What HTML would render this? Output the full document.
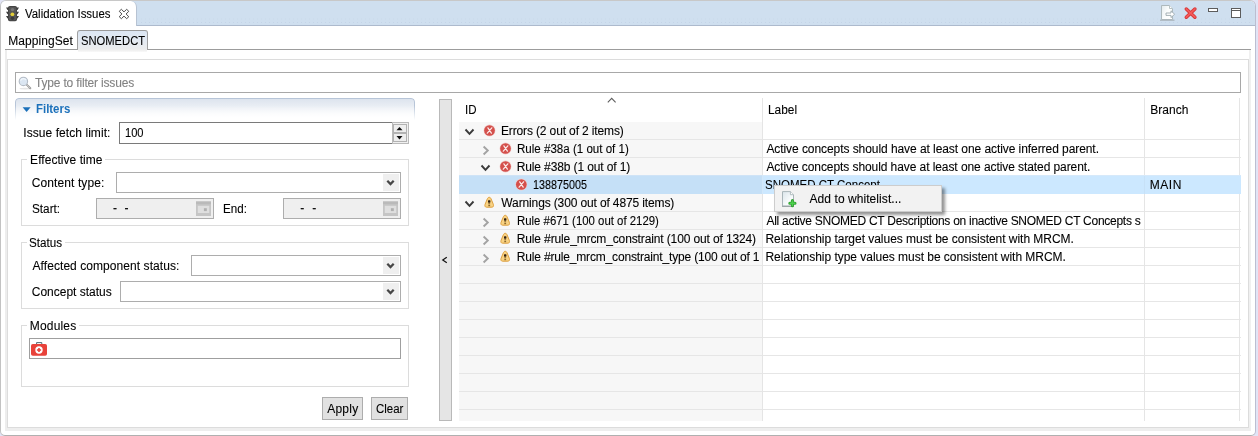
<!DOCTYPE html>
<html><head><meta charset="utf-8"><title>Validation Issues</title>
<style>
html,body{margin:0;padding:0;}
body{width:1258px;height:436px;overflow:hidden;background:#e1e4f6;font-family:"Liberation Sans",sans-serif;font-size:12px;color:#000;position:relative;}
.a{position:absolute;box-sizing:border-box;}
.t{position:absolute;white-space:pre;line-height:14px;height:14px;-webkit-text-stroke:0.1px currentColor;}
.clip{position:absolute;overflow:hidden;}
.clip .t{position:absolute;}
#win{left:0;top:0;width:1256px;height:436px;background:#fff;border:1px solid #c2c2c2;border-top-color:#c8c8c8;border-bottom-color:#b0b0b0;border-right-color:#bcbed0;border-radius:6px 6px 5px 5px;overflow:hidden;}
#hdr{left:0;top:0px;width:1256px;height:25px;background:#cfdfef;border-bottom:1px solid #adbacd;}
#vtab{left:0px;top:0px;width:136px;height:25px;background:#fff;border-radius:0 6px 0 0;border-right:1px solid #b7c3d3;}
.hl{height:1px;} .vl{width:1px;}
.combo{background:#fff;border:1px solid #adadad;}
.combo .btn{position:absolute;right:1px;top:1px;bottom:1px;width:16px;background:#efefef;}
.date{background:#efefef;border:1px solid #adadad;}
.grp{border:1px solid #dcdcdc;}
.btnb{background:#e1e1e1;border:1px solid #adadad;}
.rowline{left:459px;width:782px;height:1px;background:#e6e6e6;}
</style></head><body>
<div class="a" id="win"><div class="a" id="hdr"><div class="a" style="left:140px;top:21px;width:1112px;height:1px;background:repeating-linear-gradient(90deg,#c5d5e8 0 1px,transparent 1px 4px)"></div><div class="a" style="left:140px;top:17px;width:1112px;height:2px;background:repeating-linear-gradient(90deg,#ccdcec 0 1px,transparent 1px 4px)"></div></div><div class="a" id="vtab"></div></div>

<!-- inner tab folder frame -->
<div class="a" style="left:5px;top:50px;width:2px;height:381px;background:#ededed"></div>
<div class="a" style="left:1249px;top:50px;width:2px;height:381px;background:#f0f0f0"></div>
<div class="a" style="left:5px;top:428px;width:1246px;height:3px;background:#eeeeee"></div>
<div class="a" style="left:7px;top:59px;width:1242px;height:369px;border:1px solid #dcdcdc;background:#fff"></div>
<div class="a hl" style="left:5px;top:49px;width:1246px;background:#9c9c9c"></div>
<!-- selected inner tab -->
<div class="a" style="left:77px;top:30px;width:71px;height:20px;border:1px solid #a0a0a0;border-top-color:#999;border-bottom:none;border-radius:3px 3px 0 0;background:linear-gradient(#dbe6f3,#e4eaf2 50%,#ececec)"></div>
<div class="a" style="left:78px;top:49px;width:69px;height:3px;background:linear-gradient(#ececec,#f3f3f3 70%,#fbfbfb)"></div>

<!-- filter text -->
<div class="a" style="left:15px;top:72px;width:1226px;height:21px;border:1px solid #a8a8a8;background:#fff"></div>

<!-- Filters section header -->
<div class="a" style="left:15px;top:98px;width:400px;height:22px;border:1px solid #b7c5d8;border-bottom:none;border-radius:4px 4px 0 0;background:linear-gradient(#dde4ee,#ffffff 95%);-webkit-mask-image:linear-gradient(#000 35%,transparent 100%);mask-image:linear-gradient(#000 35%,transparent 100%)"></div>

<!-- spinner -->
<div class="a" style="left:392px;top:122px;width:17px;height:22px;border:1px solid #b9b9b9;background:#f0f0f0"></div>
<div class="a" style="left:119px;top:122px;width:273px;height:22px;border:1px solid #7a7a7a;border-right:none;background:#fff"></div>
<div class="a" style="left:393px;top:124px;width:14px;height:9px;border:1px solid #b2b2b2;background:#eeeeee"></div>
<div class="a" style="left:393px;top:133px;width:14px;height:9px;border:1px solid #b2b2b2;background:#eeeeee"></div>

<!-- groups -->
<div class="a grp" style="left:21px;top:159px;width:388px;height:67px"></div>
<div class="a" style="left:27px;top:155px;width:78px;height:10px;background:#fff"></div>
<div class="a grp" style="left:21px;top:242px;width:388px;height:67px"></div>
<div class="a" style="left:27px;top:238px;width:38px;height:10px;background:#fff"></div>
<div class="a grp" style="left:21px;top:325px;width:388px;height:62px"></div>
<div class="a" style="left:27px;top:321px;width:52px;height:10px;background:#fff"></div>

<!-- combos -->
<div class="a combo" style="left:116px;top:172px;width:285px;height:21px"><div class="btn"></div></div>
<div class="a combo" style="left:191px;top:255px;width:210px;height:21px"><div class="btn"></div></div>
<div class="a combo" style="left:120px;top:281px;width:281px;height:21px"><div class="btn"></div></div>
<!-- dates -->
<div class="a date" style="left:96px;top:198px;width:118px;height:21px"></div>
<div class="a date" style="left:283px;top:198px;width:118px;height:21px"></div>
<!-- modules input -->
<div class="a" style="left:29px;top:338px;width:372px;height:21px;border:1px solid #9f9f9f;background:#fff"></div>
<!-- buttons -->
<div class="a btnb" style="left:322px;top:397px;width:41px;height:23px"></div>
<div class="a btnb" style="left:371px;top:397px;width:37px;height:23px"></div>

<!-- sash -->
<div class="a" style="left:439px;top:99px;width:13px;height:322px;background:#e5e5e5;border:1px solid #b9b9b9"></div>

<!-- table -->
<div class="a" style="left:459px;top:122px;width:303px;height:299px;background:#f7f7f7"></div>
<div class="a rowline" style="top:139px"></div>
<div class="a rowline" style="top:157px"></div>
<div class="a rowline" style="top:211px"></div>
<div class="a rowline" style="top:229px"></div>
<div class="a rowline" style="top:247px"></div>
<div class="a rowline" style="top:265px"></div>
<div class="a rowline" style="top:283px"></div>
<div class="a rowline" style="top:301px"></div>
<div class="a rowline" style="top:319px"></div>
<div class="a rowline" style="top:337px"></div>
<div class="a rowline" style="top:355px"></div>
<div class="a rowline" style="top:373px"></div>
<div class="a rowline" style="top:391px"></div>
<div class="a rowline" style="top:409px"></div>
<div class="a vl" style="left:762px;top:98px;height:323px;background:#e5e5e5"></div>
<div class="a vl" style="left:1144px;top:98px;height:323px;background:#e5e5e5"></div>
<div class="a vl" style="left:1239px;top:98px;height:323px;background:#e5e5e5"></div>

<div class="a" style="left:459px;top:175px;width:782px;height:19px;background:#cce8ff;border-top:1px solid #d6e9fa"></div>
<div class="a" style="left:459px;top:175px;width:303px;height:19px;background:#c5e0f7;border-top:1px solid #cfe3f6"></div>
<div class="a" style="left:762px;top:175px;width:1px;height:19px;background:#d3e8fa"></div>
<div class="a" style="left:1144px;top:176px;width:1px;height:18px;background:#c7e1f7"></div>
<div class="a" id="txt" style="left:0;top:0;width:1258px;height:436px;will-change:transform">
<span class='t' style='left:25.00px;top:7px;font-size:12px;letter-spacing:0.000px;transform:scaleX(0.9512);transform-origin:0 0;'>Validation Issues</span>
<span class='t' style='left:8.16px;top:34px;font-size:12px;letter-spacing:0.075px;'>MappingSet</span>
<span class='t' style='left:80.55px;top:34px;font-size:12px;letter-spacing:0.000px;transform:scaleX(0.9333);transform-origin:0 0;'>SNOMEDCT</span>
<span class='t' style='left:35.00px;top:76px;font-size:12px;letter-spacing:-0.177px;color:#828282'>Type to filter issues</span>
<span class='t' style='left:35.76px;top:102px;font-size:12px;letter-spacing:0.000px;transform:scaleX(0.9508);transform-origin:0 0;font-weight:bold;color:#1b70ba;-webkit-text-stroke:0'>Filters</span>
<span class='t' style='left:23.33px;top:126px;font-size:12px;letter-spacing:0.059px;'>Issue fetch limit:</span>
<span class='t' style='left:125.12px;top:126px;font-size:12px;letter-spacing:0.000px;transform:scaleX(0.9262);transform-origin:0 0;'>100</span>
<span class='t' style='left:30.08px;top:153px;font-size:12px;letter-spacing:0.050px;'>Effective time</span>
<span class='t' style='left:31.80px;top:176px;font-size:12px;letter-spacing:0.091px;'>Content type:</span>
<span class='t' style='left:31.69px;top:202px;font-size:12px;letter-spacing:0.000px;transform:scaleX(0.9788);transform-origin:0 0;'>Start:</span>
<span class='t' style='left:222.87px;top:202px;font-size:12px;letter-spacing:0.000px;transform:scaleX(0.9677);transform-origin:0 0;'>End:</span>
<span class='t' style='left:112.93px;top:201px;font-size:12px;letter-spacing:0.343px;'>-  -</span>
<span class='t' style='left:300.23px;top:201px;font-size:12px;letter-spacing:0.419px;'>-  -</span>
<span class='t' style='left:29.31px;top:236px;font-size:12px;letter-spacing:0.000px;transform:scaleX(0.9691);transform-origin:0 0;'>Status</span>
<span class='t' style='left:32.56px;top:259px;font-size:12px;letter-spacing:0.062px;'>Affected component status:</span>
<span class='t' style='left:31.80px;top:285px;font-size:12px;letter-spacing:-0.012px;'>Concept status</span>
<span class='t' style='left:29.80px;top:319px;font-size:12px;letter-spacing:0.162px;'>Modules</span>
<span class='t' style='left:327.16px;top:402px;font-size:12px;letter-spacing:0.264px;'>Apply</span>
<span class='t' style='left:375.93px;top:402px;font-size:12px;letter-spacing:0.000px;transform:scaleX(0.9555);transform-origin:0 0;'>Clear</span>
<span class='t' style='left:464.58px;top:103px;font-size:12px;letter-spacing:0.000px;transform:scaleX(0.9578);transform-origin:0 0;'>ID</span>
<span class='t' style='left:768.38px;top:103px;font-size:12px;letter-spacing:0.000px;transform:scaleX(0.9892);transform-origin:0 0;'>Label</span>
<span class='t' style='left:1150.27px;top:103px;font-size:12px;letter-spacing:0.042px;'>Branch</span>
<span class='t' style='left:500.93px;top:124px;font-size:12px;letter-spacing:-0.131px;'>Errors (2 out of 2 items)</span>
<span class='t' style='left:516.82px;top:142px;font-size:12px;letter-spacing:0.000px;transform:scaleX(0.9634);transform-origin:0 0;'>Rule #38a (1 out of 1)</span>
<span class='t' style='left:516.73px;top:160px;font-size:12px;letter-spacing:-0.123px;'>Rule #38b (1 out of 1)</span>
<span class='t' style='left:533.17px;top:178px;font-size:12px;letter-spacing:0.000px;transform:scaleX(0.8967);transform-origin:0 0;'>138875005</span>
<span class='t' style='left:501.37px;top:196px;font-size:12px;letter-spacing:-0.132px;'>Warnings (300 out of 4875 items)</span>
<span class='t' style='left:516.86px;top:214px;font-size:12px;letter-spacing:0.000px;transform:scaleX(0.9496);transform-origin:0 0;'>Rule #671 (100 out of 2129)</span>
<span class='t' style='left:516.73px;top:232px;font-size:12px;letter-spacing:-0.126px;'>Rule #rule_mrcm_constraint (100 out of 1324)</span>
<span class='t' style='left:516.73px;top:250px;font-size:12px;letter-spacing:-0.166px;'>Rule #rule_mrcm_constraint_type (100 out of 1</span>
<span class='t' style='left:766.40px;top:142px;font-size:12px;letter-spacing:-0.068px;'>Active concepts should have at least one active inferred parent.</span>
<span class='t' style='left:766.40px;top:160px;font-size:12px;letter-spacing:-0.080px;'>Active concepts should have at least one active stated parent.</span>
<span class='t' style='left:764.90px;top:178px;font-size:12px;letter-spacing:0.000px;transform:scaleX(0.9591);transform-origin:0 0;'>SNOMED CT Concept</span>
<span class='t' style='left:766.40px;top:214px;font-size:12px;letter-spacing:-0.267px;'>All active SNOMED CT Descriptions on inactive SNOMED CT Concepts s</span>
<span class='t' style='left:765.48px;top:232px;font-size:12px;letter-spacing:-0.031px;'>Relationship target values must be consistent with MRCM.</span>
<span class='t' style='left:765.48px;top:250px;font-size:12px;letter-spacing:-0.032px;'>Relationship type values must be consistent with MRCM.</span>
<span class='t' style='left:1149.80px;top:178px;font-size:12px;letter-spacing:0.512px;'>MAIN</span>
</div>

<!-- context menu -->
<div class="a" style="left:774px;top:185px;width:168px;height:27px;background:#f2f2f2;border:1px solid #cdcdcd;box-shadow:3px 3px 3px rgba(0,0,0,0.42)"></div>
<div class="a" style="left:0;top:0;width:1258px;height:436px;will-change:transform"><span class='t' style='left:809.56px;top:192px;font-size:12px;letter-spacing:0.064px;'>Add to whitelist...</span></div>
<svg class="a" style="left:0;top:0" width="1258" height="436" viewBox="0 0 1258 436">


<!-- traffic light icon -->
<g>
  <path d="M6 7.5 L9 7.5 L9 10 L7.5 10 Z M6 11.7 L9 11.7 L9 14.2 L7.5 14.2 Z M6 15.9 L9 15.9 L9 18.4 L7.5 18.4 Z" fill="#3b3b3b"/>
  <path d="M19 7.5 L16 7.5 L16 10 L17.5 10 Z M19 11.7 L16 11.7 L16 14.2 L17.5 14.2 Z M19 15.9 L16 15.9 L16 18.4 L17.5 18.4 Z" fill="#3b3b3b"/>
  <rect x="8" y="6" width="9" height="15.3" rx="1.8" fill="#444"/>
  <rect x="9" y="7" width="7" height="13.3" rx="1.2" fill="#555"/>
  <circle cx="12.5" cy="9.6" r="1.7" fill="#777"/>
  <circle cx="12.4" cy="14.3" r="1.9" fill="#e0cc38"/>
  <circle cx="12.5" cy="18.3" r="1.7" fill="#3a3a3a"/>
</g>
<!-- tab close X -->
<path d="M119.2 11.3 L121.4 9.3 L124 11.9 L126.6 9.3 L128.8 11.3 L126.1 14 L128.8 16.7 L126.6 18.7 L124 16.1 L121.4 18.7 L119.2 16.7 L121.9 14 Z" fill="#fff" stroke="#4a4a4a" stroke-width="1" stroke-linejoin="round"/>

<!-- toolbar: export doc -->
<g>
  <linearGradient id="docg2" x1="0" y1="0" x2="1" y2="0.6"><stop offset="0" stop-color="#e2eaed"/><stop offset="0.55" stop-color="#fbfdfd"/><stop offset="1" stop-color="#ffffff"/></linearGradient><path d="M1161.5 5.5 L1169.5 5.5 L1172.5 8.5 L1172.5 19.5 L1161.5 19.5 Z" fill="url(#docg2)" stroke="#adb9bd" stroke-width="1"/>
  <path d="M1169.5 5.5 L1169.5 8.5 L1172.5 8.5" fill="#fff" stroke="#b7c2c4" stroke-width="1"/>
  <rect x="1160" y="19.6" width="14.5" height="1.2" fill="#aab4bb"/>
  <path d="M1166 13 L1171 13 L1171 10.8 L1174.6 14.2 L1171 17.6 L1171 15.4 L1166 15.4 Z" fill="#fff" stroke="#9aa7ad" stroke-width="0.9"/>
</g>
<!-- toolbar: red X -->
<g>
  <path d="M1186.3 9 L1194.9 17.2 M1194.9 9 L1186.3 17.2" stroke="#d83838" stroke-width="3.5" stroke-linecap="round"/>
  <path d="M1186.3 9 L1194.9 17.2 M1194.9 9 L1186.3 17.2" stroke="#f45b5b" stroke-width="1.7" stroke-linecap="round"/>
</g>
<!-- minimize -->
<rect x="1208.5" y="8.5" width="9" height="3" fill="#fff" stroke="#5c5c5c" stroke-width="1"/>
<!-- maximize -->
<rect x="1231.5" y="8.5" width="9" height="9" fill="#fff" stroke="#5c5c5c" stroke-width="1"/>
<rect x="1231" y="10" width="10" height="1" fill="#5c5c5c"/>

<!-- search magnifier -->
<g>
  <ellipse cx="25" cy="88.6" rx="5.5" ry="0.9" fill="#e4e4e4"/>
  <path d="M26.4 84.4 L30.3 88.3" stroke="#9a9a9a" stroke-width="2" stroke-linecap="round"/>
  <path d="M26.8 84.8 L30 88" stroke="#d8d8d8" stroke-width="0.7" stroke-linecap="round"/>
  <circle cx="23.4" cy="81.4" r="4.2" fill="#dbe6f2" stroke="#b4bcc6" stroke-width="1.1"/>
  <path d="M20.6 80.6 A3 3 0 0 1 26 80" stroke="#f2f7fc" stroke-width="1.2" fill="none"/>
</g>
<!-- Filters twistie -->
<path d="M22.6 107.3 L30.6 107.3 L26.6 112 Z" fill="#1b70ba"/>

<!-- spinner arrows -->
<path d="M396.5 130.3 L402.5 130.3 L399.5 126.9 Z" fill="#111"/>
<path d="M396.5 136.1 L402.5 136.1 L399.5 139.5 Z" fill="#111"/>

<!-- combo chevrons -->
<g transform="translate(390.5,183.2)"><path d="M-3.2 -2.5 L0 0.9 L3.2 -2.5" stroke="#464646" stroke-width="2.2" fill="none"/></g>
<g transform="translate(390.5,266.2)"><path d="M-3.2 -2.5 L0 0.9 L3.2 -2.5" stroke="#464646" stroke-width="2.2" fill="none"/></g>
<g transform="translate(390.5,292.2)"><path d="M-3.2 -2.5 L0 0.9 L3.2 -2.5" stroke="#464646" stroke-width="2.2" fill="none"/></g>
<!-- calendars -->
<g transform="translate(196,201.5)"><rect x="0" y="0" width="15" height="14.5" fill="#c5c5c5"/>
    <rect x="0" y="0" width="15" height="2.6" fill="#bababa"/>
    <rect x="1.8" y="4.3" width="11.5" height="7.2" fill="#dfdfdf"/>
    <rect x="7.9" y="6.7" width="2.9" height="2.9" fill="#b0b0b0"/></g>
<g transform="translate(383,201.5)"><rect x="0" y="0" width="15" height="14.5" fill="#c5c5c5"/>
    <rect x="0" y="0" width="15" height="2.6" fill="#bababa"/>
    <rect x="1.8" y="4.3" width="11.5" height="7.2" fill="#dfdfdf"/>
    <rect x="7.9" y="6.7" width="2.9" height="2.9" fill="#b0b0b0"/></g>

<!-- module icon -->
<g>
  <path d="M36.6 344.6 L36.6 342.6 L41.8 342.6 L41.8 344.6" fill="none" stroke="#3c5a66" stroke-width="0.9"/>
  <rect x="31" y="344" width="16" height="11.8" rx="1.8" fill="#e8423a"/>
  <circle cx="39" cy="350" r="3.7" fill="#fff"/>
  <path d="M39 347.9 L39 352.1 M36.9 350 L41.1 350" stroke="#e8423a" stroke-width="1.6"/>
</g>

<!-- sash arrow -->
<path d="M446.8 257.2 L442.7 260 L446.8 262.8" stroke="#111" stroke-width="1.2" fill="none"/>
<!-- sort arrow -->
<path d="M607.8 102.3 L611.7 98.4 L615.6 102.3" stroke="#5e5e5e" stroke-width="1.1" fill="none"/>

<!-- tree twisties -->
<g transform="translate(469.5,131.8)"><path d="M-4 -2.3 L0 2 L4 -2.3" stroke="#3a3a3a" stroke-width="1.9" fill="none"/></g>
<g transform="translate(485.8,150.5)"><path d="M-2.2 -4 L2 0 L-2.2 4" stroke="#a3a3a3" stroke-width="1.9" fill="none"/></g>
<g transform="translate(485.5,167.8)"><path d="M-4 -2.3 L0 2 L4 -2.3" stroke="#3a3a3a" stroke-width="1.9" fill="none"/></g>
<g transform="translate(469.5,203.8)"><path d="M-4 -2.3 L0 2 L4 -2.3" stroke="#3a3a3a" stroke-width="1.9" fill="none"/></g>
<g transform="translate(485.8,222.5)"><path d="M-2.2 -4 L2 0 L-2.2 4" stroke="#a3a3a3" stroke-width="1.9" fill="none"/></g>
<g transform="translate(485.8,240.5)"><path d="M-2.2 -4 L2 0 L-2.2 4" stroke="#a3a3a3" stroke-width="1.9" fill="none"/></g>
<g transform="translate(485.8,258.5)"><path d="M-2.2 -4 L2 0 L-2.2 4" stroke="#a3a3a3" stroke-width="1.9" fill="none"/></g>
<!-- tree icons -->
<g transform="translate(489.5,130.5)"><circle cx="0" cy="0" r="5.9" fill="#f1cfcd"/>
    <circle cx="0" cy="0" r="5.35" fill="#d4504c"/>
    <path d="M-1.6 -2.7 L1.9 2.7 M2.3 -2.7 L-2.2 2.7" stroke="#fbe9e8" stroke-width="1.25" stroke-linecap="round" fill="none"/></g>
<g transform="translate(505.5,148.5)"><circle cx="0" cy="0" r="5.9" fill="#f1cfcd"/>
    <circle cx="0" cy="0" r="5.35" fill="#d4504c"/>
    <path d="M-1.6 -2.7 L1.9 2.7 M2.3 -2.7 L-2.2 2.7" stroke="#fbe9e8" stroke-width="1.25" stroke-linecap="round" fill="none"/></g>
<g transform="translate(505.5,166.5)"><circle cx="0" cy="0" r="5.9" fill="#f1cfcd"/>
    <circle cx="0" cy="0" r="5.35" fill="#d4504c"/>
    <path d="M-1.6 -2.7 L1.9 2.7 M2.3 -2.7 L-2.2 2.7" stroke="#fbe9e8" stroke-width="1.25" stroke-linecap="round" fill="none"/></g>
<g transform="translate(521.3,184.5)"><circle cx="0" cy="0" r="5.9" fill="#f1cfcd"/>
    <circle cx="0" cy="0" r="5.35" fill="#d4504c"/>
    <path d="M-1.6 -2.7 L1.9 2.7 M2.3 -2.7 L-2.2 2.7" stroke="#fbe9e8" stroke-width="1.25" stroke-linecap="round" fill="none"/></g>
<g transform="translate(489.2,202.3)"><path d="M0 -5 C1 -5 1.5 -4.3 1.9 -3.4 L4.1 2 C4.7 3.5 4.2 4.9 2.7 4.9 L-2.7 4.9 C-4.2 4.9 -4.7 3.5 -4.1 2 L-1.9 -3.4 C-1.5 -4.3 -1 -5 0 -5 Z" fill="#f8d283" stroke="#dd9f3e" stroke-width="1"/>
    <rect x="-1.2" y="-2.1" width="2.4" height="2.5" rx="0.6" fill="#33210f"/>
    <rect x="-0.9" y="0.9" width="1.8" height="1.2" fill="#8a682c"/>
    <rect x="-0.9" y="2.7" width="1.8" height="1.2" fill="#8a682c"/></g>
<g transform="translate(505.2,220.3)"><path d="M0 -5 C1 -5 1.5 -4.3 1.9 -3.4 L4.1 2 C4.7 3.5 4.2 4.9 2.7 4.9 L-2.7 4.9 C-4.2 4.9 -4.7 3.5 -4.1 2 L-1.9 -3.4 C-1.5 -4.3 -1 -5 0 -5 Z" fill="#f8d283" stroke="#dd9f3e" stroke-width="1"/>
    <rect x="-1.2" y="-2.1" width="2.4" height="2.5" rx="0.6" fill="#33210f"/>
    <rect x="-0.9" y="0.9" width="1.8" height="1.2" fill="#8a682c"/>
    <rect x="-0.9" y="2.7" width="1.8" height="1.2" fill="#8a682c"/></g>
<g transform="translate(505.2,238.3)"><path d="M0 -5 C1 -5 1.5 -4.3 1.9 -3.4 L4.1 2 C4.7 3.5 4.2 4.9 2.7 4.9 L-2.7 4.9 C-4.2 4.9 -4.7 3.5 -4.1 2 L-1.9 -3.4 C-1.5 -4.3 -1 -5 0 -5 Z" fill="#f8d283" stroke="#dd9f3e" stroke-width="1"/>
    <rect x="-1.2" y="-2.1" width="2.4" height="2.5" rx="0.6" fill="#33210f"/>
    <rect x="-0.9" y="0.9" width="1.8" height="1.2" fill="#8a682c"/>
    <rect x="-0.9" y="2.7" width="1.8" height="1.2" fill="#8a682c"/></g>
<g transform="translate(505.2,256.3)"><path d="M0 -5 C1 -5 1.5 -4.3 1.9 -3.4 L4.1 2 C4.7 3.5 4.2 4.9 2.7 4.9 L-2.7 4.9 C-4.2 4.9 -4.7 3.5 -4.1 2 L-1.9 -3.4 C-1.5 -4.3 -1 -5 0 -5 Z" fill="#f8d283" stroke="#dd9f3e" stroke-width="1"/>
    <rect x="-1.2" y="-2.1" width="2.4" height="2.5" rx="0.6" fill="#33210f"/>
    <rect x="-0.9" y="0.9" width="1.8" height="1.2" fill="#8a682c"/>
    <rect x="-0.9" y="2.7" width="1.8" height="1.2" fill="#8a682c"/></g>
</svg>
<svg class="a" style="left:780px;top:190px" width="18" height="18" viewBox="780 190 18 18">
  <defs><linearGradient id="docg" x1="0" y1="0" x2="1" y2="1"><stop offset="0" stop-color="#dbe5ea"/><stop offset="0.6" stop-color="#f7fafb"/><stop offset="1" stop-color="#ffffff"/></linearGradient></defs>
  <path d="M782.5 191.6 L790.4 191.6 L793.5 194.7 L793.5 206 L782.5 206 Z" fill="url(#docg)" stroke="#a9b5b9" stroke-width="1"/>
  <path d="M790.4 191.6 L790.4 194.7 L793.5 194.7" fill="#fff" stroke="#a9b5b9" stroke-width="0.9"/>
  <rect x="782" y="205.9" width="12" height="0.9" fill="#8f999c"/>
  <path d="M792.4 200.6 L792.4 205.8 M789.8 203.2 L795 203.2" stroke="#2f9f2f" stroke-width="3" stroke-linecap="round"/>
  <path d="M792.4 200.9 L792.4 205.5 M790.1 203.2 L794.7 203.2" stroke="#4ed04e" stroke-width="1.5" stroke-linecap="round"/>
</svg>

</body></html>
